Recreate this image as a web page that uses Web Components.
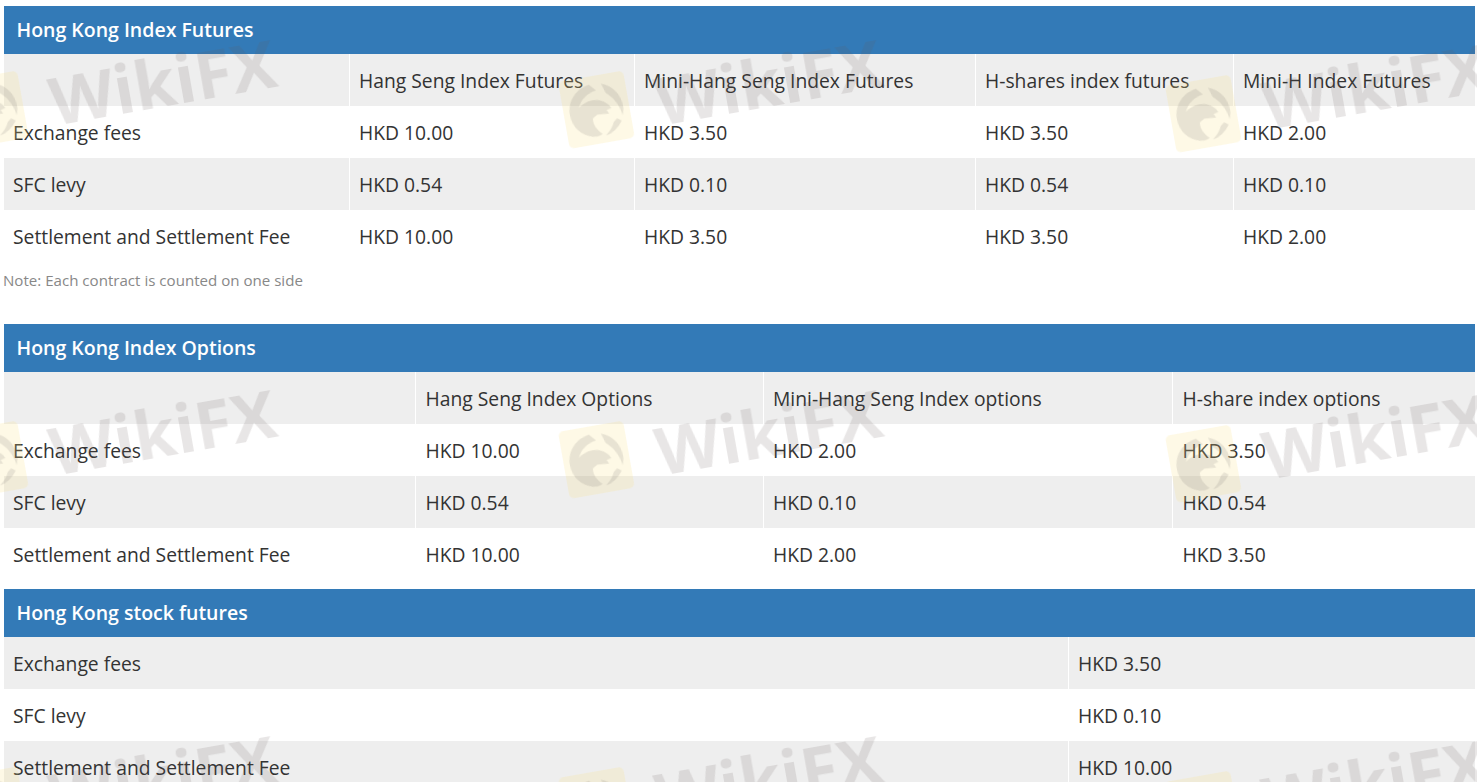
<!doctype html>
<html>
<head>
<meta charset="utf-8">
<style>
html, body { margin: 0; height: 782px; overflow: hidden; background: #fff; }
</style>
</head>
<body>
<fee-page>
	<fee-panel heading="Hong Kong Index Futures" columns="345.5px 285px 341px 258px 1fr">
		<fee-row head><fee-cell></fee-cell><fee-cell>Hang Seng Index Futures</fee-cell><fee-cell>Mini-Hang Seng Index Futures</fee-cell><fee-cell>H-shares index futures</fee-cell><fee-cell>Mini-H Index Futures</fee-cell></fee-row>
		<fee-row><fee-cell>Exchange fees</fee-cell><fee-cell>HKD 10.00</fee-cell><fee-cell>HKD 3.50</fee-cell><fee-cell>HKD 3.50</fee-cell><fee-cell>HKD 2.00</fee-cell></fee-row>
		<fee-row head><fee-cell>SFC levy</fee-cell><fee-cell>HKD 0.54</fee-cell><fee-cell>HKD 0.10</fee-cell><fee-cell>HKD 0.54</fee-cell><fee-cell>HKD 0.10</fee-cell></fee-row>
		<fee-row><fee-cell>Settlement and Settlement Fee</fee-cell><fee-cell>HKD 10.00</fee-cell><fee-cell>HKD 3.50</fee-cell><fee-cell>HKD 3.50</fee-cell><fee-cell>HKD 2.00</fee-cell></fee-row>
		<span slot="note">Note: Each contract is counted on one side</span>
	</fee-panel>
	<fee-panel heading="Hong Kong Index Options" columns="412px 347.5px 409.5px 1fr">
		<fee-row head><fee-cell></fee-cell><fee-cell>Hang Seng Index Options</fee-cell><fee-cell>Mini-Hang Seng Index options</fee-cell><fee-cell>H-share index options</fee-cell></fee-row>
		<fee-row><fee-cell>Exchange fees</fee-cell><fee-cell>HKD 10.00</fee-cell><fee-cell>HKD 2.00</fee-cell><fee-cell>HKD 3.50</fee-cell></fee-row>
		<fee-row head><fee-cell>SFC levy</fee-cell><fee-cell>HKD 0.54</fee-cell><fee-cell>HKD 0.10</fee-cell><fee-cell>HKD 0.54</fee-cell></fee-row>
		<fee-row><fee-cell>Settlement and Settlement Fee</fee-cell><fee-cell>HKD 10.00</fee-cell><fee-cell>HKD 2.00</fee-cell><fee-cell>HKD 3.50</fee-cell></fee-row>
	</fee-panel>
	<fee-panel heading="Hong Kong stock futures" columns="1064.5px 1fr">
		<fee-row head><fee-cell>Exchange fees</fee-cell><fee-cell>HKD 3.50</fee-cell></fee-row>
		<fee-row><fee-cell>SFC levy</fee-cell><fee-cell>HKD 0.10</fee-cell></fee-row>
		<fee-row head><fee-cell>Settlement and Settlement Fee</fee-cell><fee-cell>HKD 10.00</fee-cell></fee-row>
	</fee-panel>
	<wiki-mark slot="overlay" style="left:-48px;top:82px"></wiki-mark>
	<wiki-mark slot="overlay" style="left:558px;top:82px"></wiki-mark>
	<wiki-mark slot="overlay" style="left:1165px;top:86px"></wiki-mark>
	<wiki-mark slot="overlay" style="left:-48px;top:432px"></wiki-mark>
	<wiki-mark slot="overlay" style="left:558px;top:432px"></wiki-mark>
	<wiki-mark slot="overlay" style="left:1165px;top:436px"></wiki-mark>
	<wiki-mark slot="overlay" style="left:-48px;top:778px"></wiki-mark>
	<wiki-mark slot="overlay" style="left:558px;top:778px"></wiki-mark>
	<wiki-mark slot="overlay" style="left:1165px;top:782px"></wiki-mark>
</fee-page>
<script>
const fontStack = `"Open Sans", "Noto Sans", "Liberation Sans", sans-serif`;

class FeePage extends HTMLElement {
	constructor() {
		super();
		this.attachShadow({ mode: "open" });
		this.shadowRoot.innerHTML = `<style>
:host {
	display: block;
	position: relative;
	height: 782px;
	overflow: hidden;
	padding: 6px 2px 0 4px;
	box-sizing: border-box;
	font-family: ${fontStack};
	color: #333;
}
.overlay {
	position: absolute;
	inset: 0;
	pointer-events: none;
}
</style><slot></slot><div class="overlay"><slot name="overlay"></slot></div>`;
	}
}

class FeePanel extends HTMLElement {
	constructor() {
		super();
		this.attachShadow({ mode: "open" });
		this.shadowRoot.innerHTML = `<style>
:host {
	display: block;
	margin-bottom: 9px;
}
header {
	height: 46px;
	padding: 0 0 2px 12.5px;
	display: flex;
	align-items: center;
	background: #337ab7;
	color: #fff;
	font-size: 19.5px;
	font-weight: 600;
}
.note {
	font-size: 15.1px;
	color: #888;
	height: 53px;
	line-height: 37px;
	margin-left: -1px;
}
</style><header></header><slot></slot><div class="note-wrap"><slot name="note"></slot></div>`;
		this.shadowRoot.querySelector("header").textContent = this.getAttribute("heading");
		if (this.querySelector("[slot=note]")) {
			this.shadowRoot.querySelector(".note-wrap").className = "note";
		}
		this.style.setProperty("--columns", this.getAttribute("columns"));
	}
}

class FeeRow extends HTMLElement {
	constructor() {
		super();
		this.attachShadow({ mode: "open" });
		this.shadowRoot.innerHTML = `<style>
:host {
	display: grid;
	grid-template-columns: var(--columns);
	height: 52px;
}
:host([head]) {
	background: #eee;
}
</style><slot></slot>`;
	}
}

class FeeCell extends HTMLElement {
	constructor() {
		super();
		this.attachShadow({ mode: "open" });
		this.shadowRoot.innerHTML = `<style>
:host {
	display: flex;
	align-items: center;
	padding-left: 9.5px;
	font-size: 19.3px;
	border-right: 1px solid #fff;
	white-space: nowrap;
	min-width: 0;
	box-sizing: border-box;
}
:host(:first-child) { padding-left: 9px; }
:host(:last-child) { border-right: 0; }
</style><slot></slot>`;
	}
}

class WikiMark extends HTMLElement {
	constructor() {
		super();
		this.attachShadow({ mode: "open" });
		this.shadowRoot.innerHTML = `<style>
:host {
	position: absolute;
	display: block;
	width: 330px;
	height: 80px;
	transform: rotate(-10deg);
	transform-origin: 0 0;
	filter: blur(.6px);
}
svg {
	position: absolute;
	left: 0;
	top: 0;
	width: 66px;
	height: 68px;
}
span {
	position: absolute;
	left: 93px;
	top: 2px;
	font: 700 67px/67px "Open Sans", sans-serif;
	color: rgba(100, 85, 85, .15);
}
</style>
<svg viewBox="0 0 66 68" aria-hidden="true">
	<rect width="66" height="68" rx="5" fill="rgba(250, 225, 130, .2)"/>
	<g fill="rgba(100, 90, 90, .14)">
		<path d="M30 8C16 10 6 21 6 35c0 12 8 22 19 25 5 1 8 0 10-1-5-5-8-11-7-17l5-3 12 1-2-4 5-1c-2-6-9-11-17-11-6 0-11 2-15 5 4-8 11-13 20-14z"/>
		<path d="M42 9c11 4 18 14 18 26 0 3-1 6-2 9-1-9-5-18-13-25z"/>
		<path d="M56 49c-5 7-11 11-18 12 4-3 8-7 10-12l4-3z"/>
	</g>
</svg>
<span>WikiFX</span>`;
	}
}

customElements.define("fee-page", FeePage);
customElements.define("fee-panel", FeePanel);
customElements.define("fee-row", FeeRow);
customElements.define("fee-cell", FeeCell);
customElements.define("wiki-mark", WikiMark);
</script>
</body>
</html>
